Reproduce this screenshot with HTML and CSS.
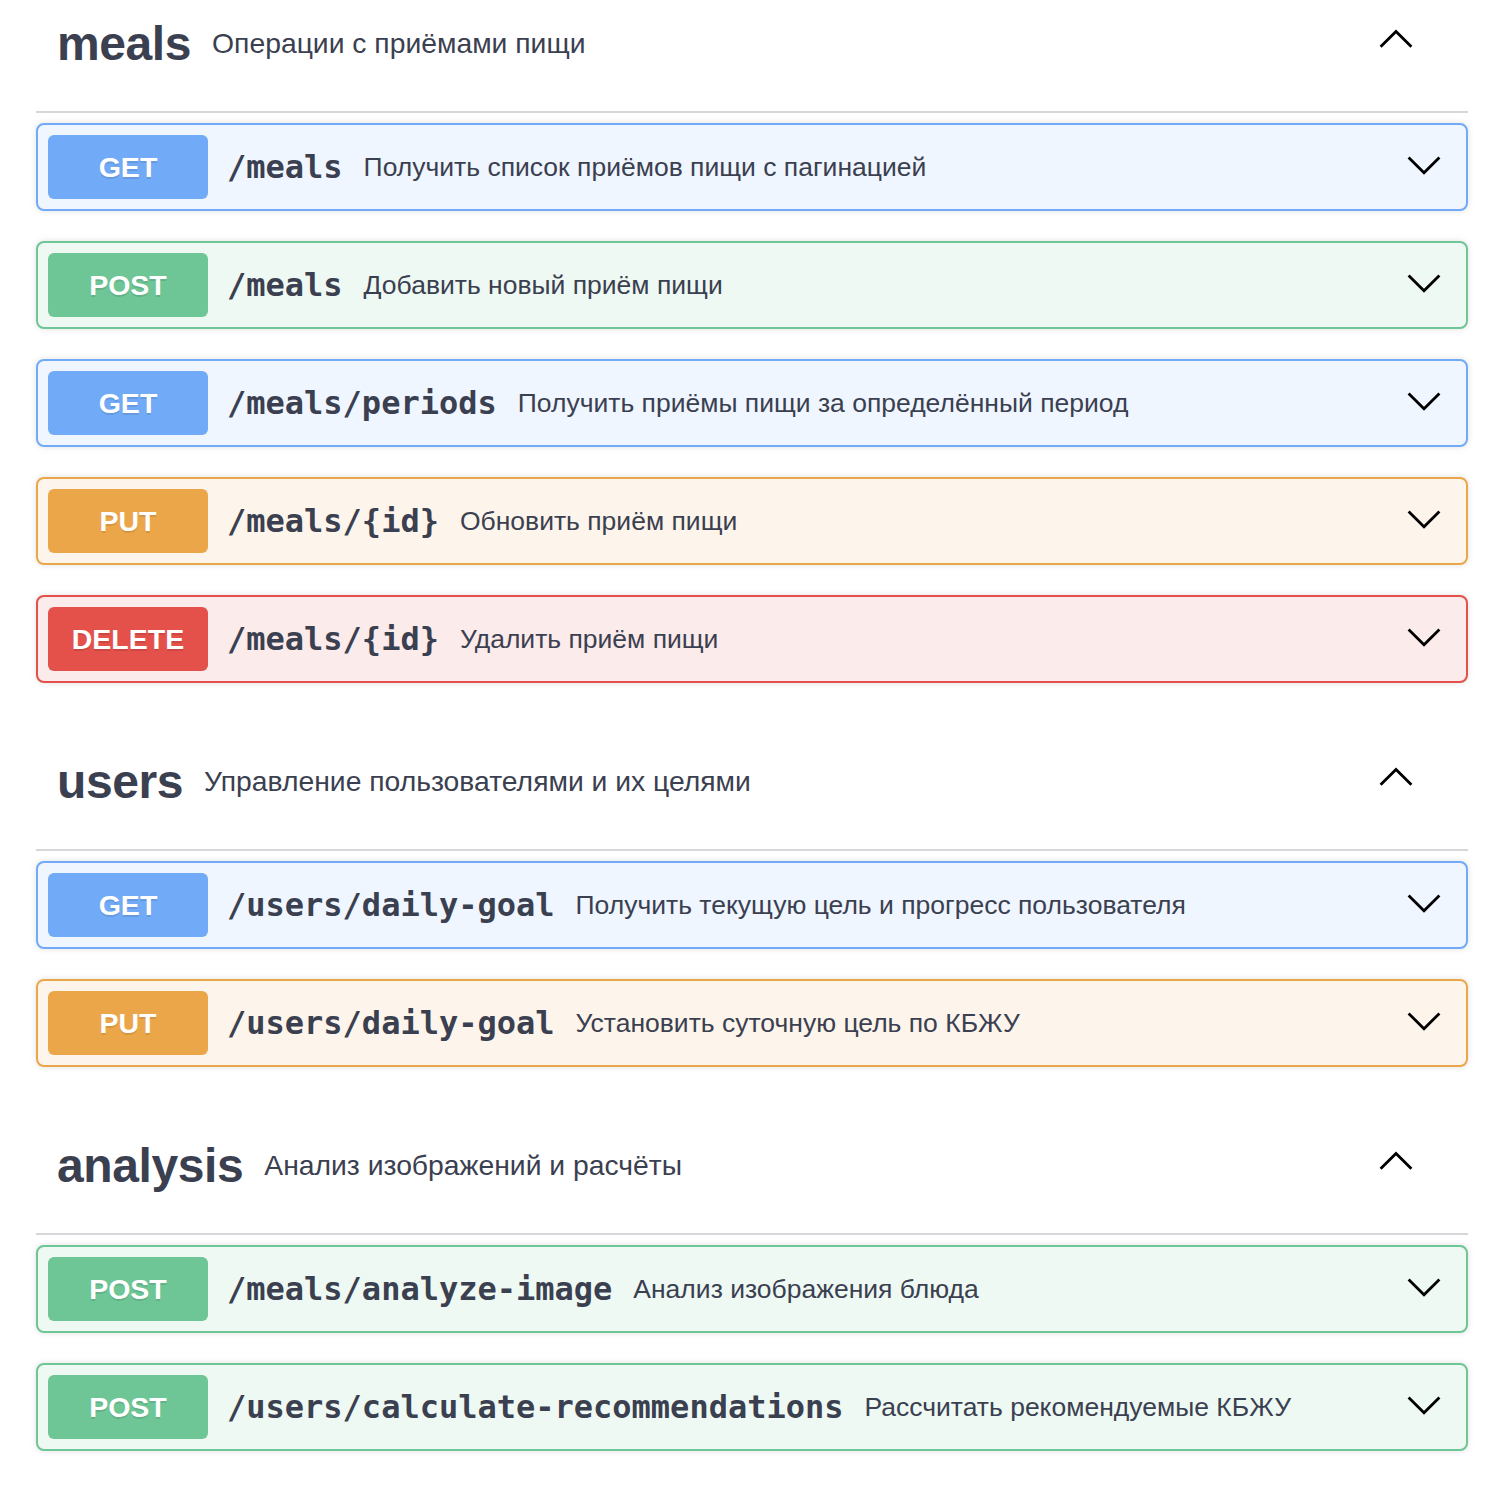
FILE: index.html
```html
<!DOCTYPE html>
<html lang="ru">
<head>
<meta charset="utf-8">
<title>API</title>
<link rel="stylesheet" href="styles.css">
</head>
<body>
<div class="wrapper">

  <section class="tag-section">
    <h3 class="tag">
      <span class="tag-name">meals</span>
      <small class="tag-desc">Операции с приёмами пищи</small>
      <svg class="tag-arrow" viewBox="0 0 20 20" width="40" height="40"><path d="M2.3 14.4 10 6.7l7.7 7.7" fill="none" stroke="#000" stroke-width="1.4"/></svg>
    </h3>
    <div class="ops">
      <div class="op op-get"><span class="method">GET</span><span class="path">/meals</span><span class="desc">Получить список приёмов пищи с пагинацией</span><svg class="op-arrow" viewBox="0 0 20 20" width="40" height="40"><path d="M2.3 6.7 10 14.4l7.7-7.7" fill="none" stroke="#000" stroke-width="1.4"/></svg></div>
      <div class="op op-post"><span class="method">POST</span><span class="path">/meals</span><span class="desc">Добавить новый приём пищи</span><svg class="op-arrow" viewBox="0 0 20 20" width="40" height="40"><path d="M2.3 6.7 10 14.4l7.7-7.7" fill="none" stroke="#000" stroke-width="1.4"/></svg></div>
      <div class="op op-get"><span class="method">GET</span><span class="path">/meals/periods</span><span class="desc">Получить приёмы пищи за определённый период</span><svg class="op-arrow" viewBox="0 0 20 20" width="40" height="40"><path d="M2.3 6.7 10 14.4l7.7-7.7" fill="none" stroke="#000" stroke-width="1.4"/></svg></div>
      <div class="op op-put"><span class="method">PUT</span><span class="path">/meals/{id}</span><span class="desc">Обновить приём пищи</span><svg class="op-arrow" viewBox="0 0 20 20" width="40" height="40"><path d="M2.3 6.7 10 14.4l7.7-7.7" fill="none" stroke="#000" stroke-width="1.4"/></svg></div>
      <div class="op op-delete"><span class="method">DELETE</span><span class="path">/meals/{id}</span><span class="desc">Удалить приём пищи</span><svg class="op-arrow" viewBox="0 0 20 20" width="40" height="40"><path d="M2.3 6.7 10 14.4l7.7-7.7" fill="none" stroke="#000" stroke-width="1.4"/></svg></div>
    </div>
  </section>

  <section class="tag-section">
    <h3 class="tag">
      <span class="tag-name">users</span>
      <small class="tag-desc">Управление пользователями и их целями</small>
      <svg class="tag-arrow" viewBox="0 0 20 20" width="40" height="40"><path d="M2.3 14.4 10 6.7l7.7 7.7" fill="none" stroke="#000" stroke-width="1.4"/></svg>
    </h3>
    <div class="ops">
      <div class="op op-get"><span class="method">GET</span><span class="path">/users/daily-goal</span><span class="desc">Получить текущую цель и прогресс пользователя</span><svg class="op-arrow" viewBox="0 0 20 20" width="40" height="40"><path d="M2.3 6.7 10 14.4l7.7-7.7" fill="none" stroke="#000" stroke-width="1.4"/></svg></div>
      <div class="op op-put"><span class="method">PUT</span><span class="path">/users/daily-goal</span><span class="desc">Установить суточную цель по КБЖУ</span><svg class="op-arrow" viewBox="0 0 20 20" width="40" height="40"><path d="M2.3 6.7 10 14.4l7.7-7.7" fill="none" stroke="#000" stroke-width="1.4"/></svg></div>
    </div>
  </section>

  <section class="tag-section">
    <h3 class="tag">
      <span class="tag-name">analysis</span>
      <small class="tag-desc">Анализ изображений и расчёты</small>
      <svg class="tag-arrow" viewBox="0 0 20 20" width="40" height="40"><path d="M2.3 14.4 10 6.7l7.7 7.7" fill="none" stroke="#000" stroke-width="1.4"/></svg>
    </h3>
    <div class="ops">
      <div class="op op-post"><span class="method">POST</span><span class="path">/meals/analyze-image</span><span class="desc">Анализ изображения блюда</span><svg class="op-arrow" viewBox="0 0 20 20" width="40" height="40"><path d="M2.3 6.7 10 14.4l7.7-7.7" fill="none" stroke="#000" stroke-width="1.4"/></svg></div>
      <div class="op op-post"><span class="method">POST</span><span class="path">/users/calculate-recommendations</span><span class="desc">Рассчитать рекомендуемые КБЖУ</span><svg class="op-arrow" viewBox="0 0 20 20" width="40" height="40"><path d="M2.3 6.7 10 14.4l7.7-7.7" fill="none" stroke="#000" stroke-width="1.4"/></svg></div>
    </div>
  </section>

</div>
</body>
</html>
```

FILE: styles.css
```css
html, body {
  margin: 0;
  padding: 0;
  background: #fff;
}

body {
  font-family: "Liberation Sans", Arial, sans-serif;
  color: #3b4050;
}

.wrapper {
  width: 1432px;
  margin: -25px 0 0 36px;
}

.tag-section {
  display: flex;
  flex-direction: column;
}

.tag {
  display: flex;
  align-items: center;
  box-sizing: border-box;
  height: 138px;
  margin: 0 0 10px;
  padding: 0 52px 0 21px;
  border-bottom: 2px solid #d6d7da;
  font-weight: normal;
}

.tag-name {
  font-size: 48px;
  font-weight: bold;
  color: #3b4050;
  letter-spacing: -0.4px;
}

.tag-desc {
  flex: 1;
  padding: 0 21px;
  font-size: 28.3px;
  color: #3b4050;
}

.tag-arrow {
  flex: none;
  margin-top: -10px;
}

.ops {
  display: flex;
  flex-direction: column;
  gap: 30px;
  margin-bottom: 30px;
}

.op {
  display: flex;
  align-items: center;
  padding: 10px;
  border: 2px solid;
  border-radius: 8px;
  box-shadow: 0 0 6px rgba(0, 0, 0, 0.12);
}

.method {
  flex: none;
  width: 160px;
  height: 64px;
  line-height: 64px;
  border-radius: 6px;
  text-align: center;
  color: #fff;
  font-size: 28.5px;
  font-weight: bold;
  text-shadow: 0 2px 0 rgba(0, 0, 0, 0.1);
}

.path {
  padding: 0 21px 0 19px;
  font-family: "DejaVu Sans Mono", "Liberation Mono", monospace;
  font-size: 32px;
  font-weight: bold;
  color: #3b4050;
}

.desc {
  flex: 1;
  font-size: 26.5px;
  color: #3b4050;
}

.op-arrow {
  flex: none;
  margin-right: 12px;
  margin-top: -7px;
}

.op-get { background: #eff6ff; border-color: #71aaf6; }
.op-get .method { background: #71aaf6; }

.op-post { background: #eef9f3; border-color: #6ec595; }
.op-post .method { background: #6ec595; }

.op-put { background: #fdf5eb; border-color: #eca64a; }
.op-put .method { background: #eca64a; }

.op-delete { background: #fbebeb; border-color: #e4504a; }
.op-delete .method { background: #e4504a; }
```
